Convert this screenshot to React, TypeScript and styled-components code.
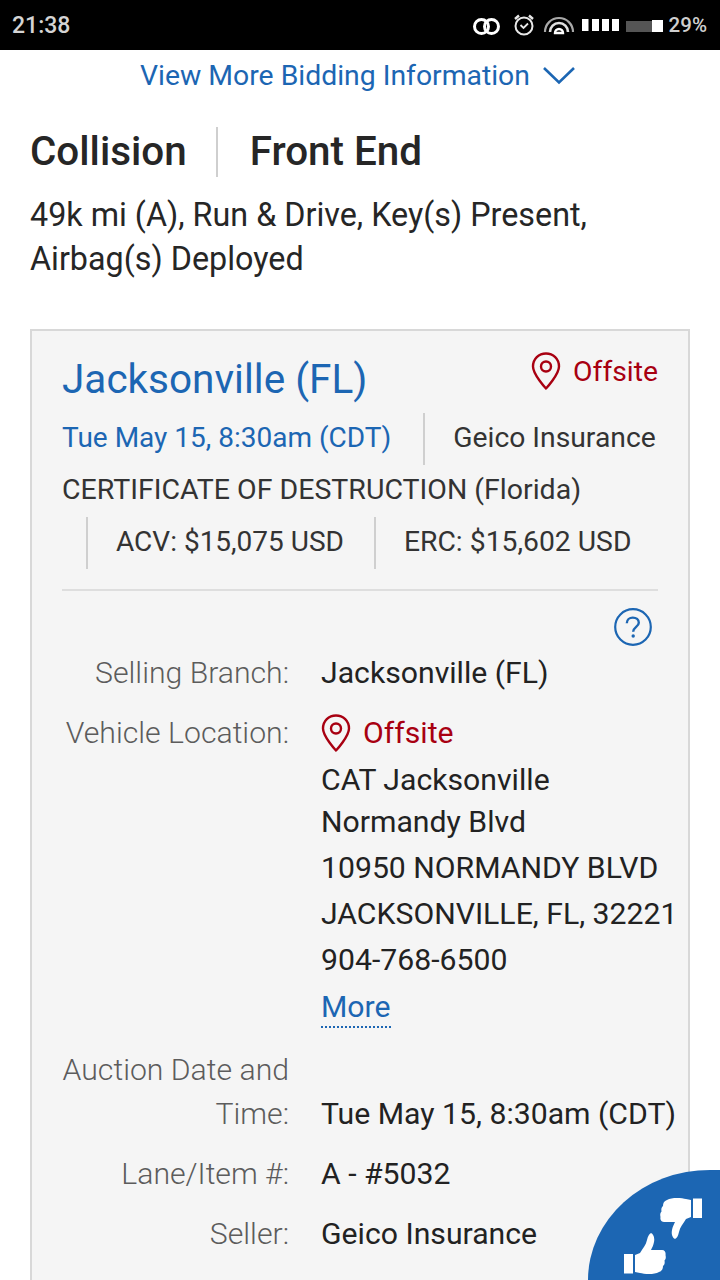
import styled, { createGlobalStyle } from "styled-components";

const GlobalStyle = createGlobalStyle`
  html, body {
    margin: 0;
    padding: 0;
    height: 1280px;
    overflow: hidden;
    background: #fff;
    font-family: Roboto, "Liberation Sans", sans-serif;
  }
`;

const BLUE = "#1c66b3";
const RED = "#a80011";

const Page = styled.div`
  width: 720px;
  height: 1280px;
  overflow: hidden;
  position: relative;
  background: #fff;
`;

// Barre de statut
const StatusBar = styled.div`
  height: 50px;
  background: #000;
  display: flex;
  align-items: center;
  justify-content: space-between;
  padding: 0 13px 0 12px;
`;

const Clock = styled.span`
  color: #d4d4d4;
  font-size: 23px;
  font-weight: 500;
`;

const StatusIcons = styled.div`
  display: flex;
  align-items: center;
`;

const Percent = styled.span`
  color: #cfcfcf;
  font-size: 20.5px;
  font-weight: 500;
  margin-left: 4px;
`;

const MoreLink = styled.div`
  height: 50px;
  display: flex;
  align-items: center;
  justify-content: center;
  gap: 12px;
  color: ${BLUE};
  font-size: 28.35px;
  padding-right: 4px;
`;

const Summary = styled.div`
  padding: 27px 30px 0;
`;

const TitleRow = styled.div`
  display: flex;
  align-items: center;
  height: 50px;
`;

const Title = styled.h1<{ $divider?: boolean }>`
  margin: 0;
  font-size: 40.4px;
  font-weight: 500;
  color: #262626;
  line-height: 50px;
  ${({ $divider }) =>
    $divider &&
    `
    border-right: 2px solid #cfcfcf;
    padding-right: 29px;
    margin-right: 32px;
  `}
`;

const Description = styled.p`
  margin: 16px 0 0;
  font-size: 32.3px;
  line-height: 44px;
  color: #262626;
`;

const Card = styled.div`
  margin: 48px 30px 0;
  background: #f5f5f5;
  border: 2px solid #d8d8d8;
  padding: 20px 30px 80px;
`;

const CardHead = styled.div`
  display: flex;
  justify-content: space-between;
  align-items: flex-start;
  height: 56px;
  margin-bottom: 6px;
`;

const City = styled.div`
  font-size: 40.5px;
  line-height: 56px;
  color: ${BLUE};
`;

const Offsite = styled.span<{ $size: number }>`
  display: flex;
  align-items: center;
  gap: 12px;
  height: 40px;
  color: ${RED};
  font-size: ${({ $size }) => $size}px;
`;

const InfoRow = styled.div<{ $indent?: number; $size?: number }>`
  display: flex;
  align-items: center;
  box-sizing: border-box;
  height: 52px;
  font-size: ${({ $size }) => $size ?? 28}px;
  color: #333;
  white-space: nowrap;
  padding-left: ${({ $indent }) => $indent ?? 0}px;
  padding-bottom: ${({ $size }) => ($size ? 4 : 0)}px;
`;

const InfoCell = styled.span<{ $blue?: boolean; $divider?: boolean; $after?: number; $size?: number }>`
  color: ${({ $blue }) => ($blue ? BLUE : "#333")};
  display: flex;
  align-items: center;
  box-sizing: border-box;
  height: 52px;
  padding-bottom: 4px;
  font-size: ${({ $size }) => $size ?? 28}px;
  margin-right: ${({ $after }) => $after ?? 0}px;
  ${({ $divider }) => $divider && "border-left: 2px solid #cfcfcf; padding-left: 28px;"}
`;

const Separator = styled.hr`
  border: 0;
  border-top: 2px solid #dedede;
  margin: 20px 0 0;
`;

const HelpRow = styled.div`
  display: flex;
  justify-content: flex-end;
  padding: 17px 6px 0 0;
  height: 42px;
`;

const Details = styled.dl`
  margin: 0 0 0 -30px;
  display: grid;
  grid-template-columns: 257px 1fr;
  column-gap: 32px;
  row-gap: 14px;
  width: 656px;
`;

const Label = styled.dt<{ $wrapped?: boolean }>`
  font-size: 30.2px;
  font-weight: 300;
  color: #5c5c5c;
  text-align: right;
  line-height: 44px;
  padding: ${({ $wrapped }) => ($wrapped ? "0 0 1px" : "1px 0 0")};
`;

const Value = styled.dd<{ $end?: boolean }>`
  margin: 0;
  font-size: 30.2px;
  color: #222;
  line-height: 46px;
  white-space: nowrap;
  align-self: ${({ $end }) => ($end ? "end" : "start")};
`;

const OffsiteLine = styled.div`
  height: 46px;
  display: flex;
  align-items: center;
`;

const BranchName = styled.div`
  line-height: 42px;
  margin-top: 3px;
  margin-bottom: 2px;
`;

const More = styled.span`
  color: ${BLUE};
  padding-bottom: 2px;
  border-bottom: 2px dotted ${BLUE};
`;

const MoreLine = styled.div`
  margin-top: 1px;
  padding-bottom: 4px;
`;

const FeedbackButton = styled.div`
  position: absolute;
  right: 0;
  bottom: 0;
  width: 132px;
  height: 110px;
  background: ${BLUE};
  border-top-left-radius: 122px 110px;
`;

const ThumbSvg = styled.svg<{ $down?: boolean }>`
  position: absolute;
  left: ${({ $down }) => ($down ? 72 : 36)}px;
  top: ${({ $down }) => ($down ? 27 : 63)}px;
  transform: ${({ $down }) => ($down ? "rotate(180deg)" : "none")};
`;

const Thumb = ({ down }: { down?: boolean }) => (
  <ThumbSvg $down={down} width="42" height="42" viewBox="0 0 42 42" fill="#fff">
    <rect x="0" y="21" width="9" height="19.5" />
    <path d="M11 22 L16 20 C19 15 22 12 23 7 C24 3 25 1 27 0 C29 1 31 4 30 9 C29.5 12 28 15 27 17 L38 17 C41 17 42 20 41.5 22 C42 24 42 26 40.5 27.5 C41 30 40.5 32 39 33 C39 36 38 38 35 39 C30 42 20 41 16 40 L11 39 Z" />
  </ThumbSvg>
);

const Pin = () => (
  <svg width="30" height="38" viewBox="0 0 30 38" fill="none" stroke={RED} strokeWidth="2.4">
    <path d="M15 36.5 C15 36.5 2 22.5 2 14.5 C2 6.8 7.8 1.5 15 1.5 C22.2 1.5 28 6.8 28 14.5 C28 22.5 15 36.5 15 36.5 Z" strokeLinejoin="round" />
    <circle cx="15" cy="14.5" r="5" />
  </svg>
);

const Chevron = () => (
  <svg width="34" height="20" viewBox="0 0 34 20" fill="none" stroke={BLUE} strokeWidth="2.6">
    <path d="M2 3 L17 17.5 L32 3" />
  </svg>
);

const HelpIcon = () => (
  <svg width="38" height="38" viewBox="0 0 38 38" fill="none">
    <circle cx="19" cy="19" r="17.8" stroke={BLUE} strokeWidth="2.2" />
    <path d="M12.8 15.2 C12.8 11.6 15.5 9.6 18.8 9.6 C22.2 9.6 24.8 11.6 24.8 14.8 C24.8 18.8 19.2 19.2 19.2 23.8" stroke={BLUE} strokeWidth="2.4" />
    <circle cx="19.2" cy="28" r="1.7" fill={BLUE} />
  </svg>
);

// viewBox en coordonnées de la page, de x=470 à x=665
const StatusGlyphs = () => (
  <svg width="195" height="50" viewBox="470 0 195 50" fill="none">
    <circle cx="481.5" cy="26.5" r="7" stroke="#fff" strokeWidth="3" />
    <circle cx="491.5" cy="26.5" r="7" stroke="#fff" strokeWidth="3" />

    <circle cx="524" cy="26" r="8.5" stroke="#e8e8e8" strokeWidth="2" />
    <path d="M520.5 25 L523.5 28 L528 23.5" stroke="#e8e8e8" strokeWidth="1.8" />
    <path d="M515 19 L519 15.5 M533 19 L529 15.5" stroke="#e8e8e8" strokeWidth="2.4" />

    <path d="M545 32 A14 14 0 0 1 573 32" stroke="#a8a8a8" strokeWidth="2.2" />
    <path d="M550 32 A9 9 0 0 1 568 32" stroke="#e0e0e0" strokeWidth="2.6" />
    <path d="M555 33 A4 4 0 0 1 563 33 Z" stroke="#fff" strokeWidth="2.4" />

    <rect x="582" y="19" width="6.5" height="12" fill="#fff" />
    <rect x="592" y="19" width="7" height="12" fill="#fff" />
    <rect x="602" y="19" width="7" height="12" fill="#fff" />
    <rect x="612" y="19" width="7" height="12" fill="#fff" />

    <rect x="626" y="21" width="26" height="11" fill="#555" />
    <rect x="652" y="20" width="11" height="12" fill="#fff" />
  </svg>
);

const App = () => {
  return (
    <Page>
      <GlobalStyle />
      <StatusBar>
        <Clock>21:38</Clock>
        <StatusIcons>
          <StatusGlyphs />
          <Percent>29%</Percent>
        </StatusIcons>
      </StatusBar>

      <MoreLink>
        View More Bidding Information
        <Chevron />
      </MoreLink>

      <Summary>
        <TitleRow>
          <Title $divider>Collision</Title>
          <Title>Front End</Title>
        </TitleRow>
        <Description>
          49k mi (A), Run &amp; Drive, Key(s) Present,
          <br />
          Airbag(s) Deployed
        </Description>
      </Summary>

      <Card>
        <CardHead>
          <City>Jacksonville (FL)</City>
          <Offsite $size={28.3}>
            <Pin />
            Offsite
          </Offsite>
        </CardHead>
        <InfoRow>
          <InfoCell $blue $after={32}>Tue May 15, 8:30am (CDT)</InfoCell>
          <InfoCell $divider $size={28.3}>Geico Insurance</InfoCell>
        </InfoRow>
        <InfoRow $size={28.5}>CERTIFICATE OF DESTRUCTION (Florida)</InfoRow>
        <InfoRow $indent={24}>
          <InfoCell $divider $after={30}>ACV: $15,075 USD</InfoCell>
          <InfoCell $divider $size={28.3}>ERC: $15,602 USD</InfoCell>
        </InfoRow>
        <Separator />
        <HelpRow>
          <HelpIcon />
        </HelpRow>

        <Details>
          <Label>Selling Branch:</Label>
          <Value>Jacksonville (FL)</Value>
          <Label>Vehicle Location:</Label>
          <Value>
            <OffsiteLine>
              <Offsite $size={30.2}>
                <Pin />
                Offsite
              </Offsite>
            </OffsiteLine>
            <BranchName>
              CAT Jacksonville
              <br />
              Normandy Blvd
            </BranchName>
            10950 NORMANDY BLVD
            <br />
            JACKSONVILLE, FL, 32221
            <br />
            904-768-6500
            <MoreLine>
              <More>More</More>
            </MoreLine>
          </Value>
          <Label $wrapped>Auction Date and Time:</Label>
          <Value $end>Tue May 15, 8:30am (CDT)</Value>
          <Label>Lane/Item #:</Label>
          <Value>A - #5032</Value>
          <Label>Seller:</Label>
          <Value>Geico Insurance</Value>
        </Details>
      </Card>

      <FeedbackButton>
        <Thumb down />
        <Thumb />
      </FeedbackButton>
    </Page>
  );
};

export default App;
